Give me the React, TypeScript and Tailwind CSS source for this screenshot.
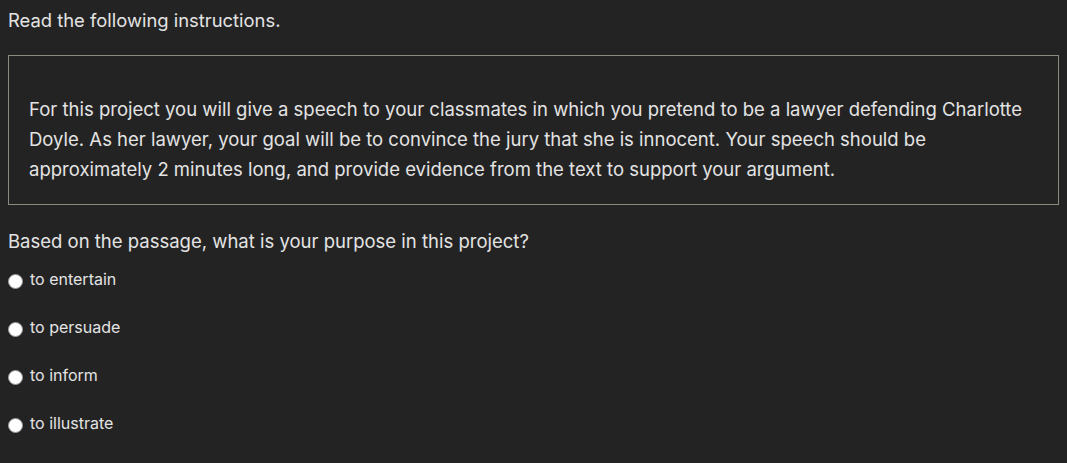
const options = ["to entertain", "to persuade", "to inform", "to illustrate"];

export default function App() {
  return (
    <div
      className="h-[463px] w-full overflow-hidden bg-[#232323] px-2 text-[#e3e3e3]"
      style={{ fontFamily: "Inter, 'Open Sans', sans-serif" }}
    >
      <p className="pt-[8px] text-[18.4px] leading-[24px]">Read the following instructions.</p>

      <div className="mt-[23px] border border-[#8c8b82] px-[20px] pb-[20px] pt-[38px]">
        <p className="text-[18.5px] leading-[30px]">
          For this project you will give a speech to your classmates in which you pretend to be a lawyer
          defending Charlotte Doyle. As her lawyer, your goal will be to convince the jury that she is
          innocent. Your speech should be approximately 2 minutes long, and provide evidence from the text to
          support your argument.
        </p>
      </div>

      <p className="mt-[23px] text-[18.5px] leading-[26px]">
        Based on the passage, what is your purpose in this project?
      </p>

      <ul className="mt-[15px] flex flex-col gap-[28px]">
        {options.map((o) => (
          <li key={o} className="flex items-start gap-[7px] text-[16px] leading-[20px]">
            <span className="mt-[5px] h-[15px] w-[15px] shrink-0 rounded-full border border-[#9a9a9a] bg-white" />
            <span>{o}</span>
          </li>
        ))}
      </ul>
    </div>
  );
}
